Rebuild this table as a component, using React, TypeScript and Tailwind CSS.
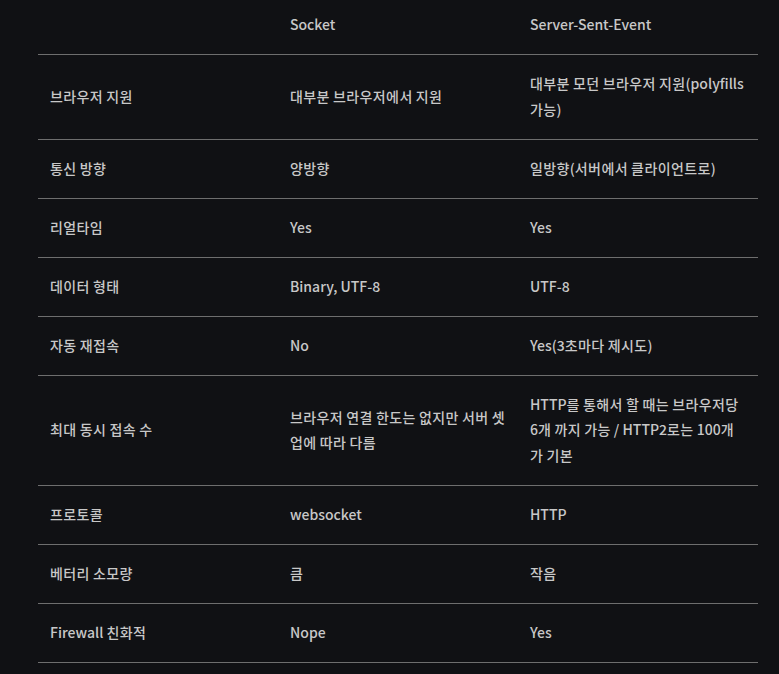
import React from "react";

const rows: [string, string, string][] = [
  ["브라우저 지원", "대부분 브라우저에서 지원", "대부분 모던 브라우저 지원(polyfills 가능)"],
  ["통신 방향", "양방향", "일방향(서버에서 클라이언트로)"],
  ["리얼타임", "Yes", "Yes"],
  ["데이터 형태", "Binary, UTF-8", "UTF-8"],
  ["자동 재접속", "No", "Yes(3초마다 제시도)"],
  ["최대 동시 접속 수", "브라우저 연결 한도는 없지만 서버 셋업에 따라 다름", "HTTP를 통해서 할 때는 브라우저당 6개 까지 가능 / HTTP2로는 100개가 기본"],
  ["프로토콜", "websocket", "HTTP"],
  ["베터리 소모량", "큼", "작음"],
  ["Firewall 친화적", "Nope", "Yes"],
];

function Txt({ text }: { text: string }) {
  const parts = text.match(/[\uAC00-\uD7A3]+|\s+|[^\uAC00-\uD7A3\s]+/g) || [];
  return (
    <>
      {parts.map((p, i) =>
        /[\uAC00-\uD7A3]/.test(p) ? (
          <span key={i} className="tracking-[0.4px]">
            {p}
          </span>
        ) : (
          <React.Fragment key={i}>{p}</React.Fragment>
        )
      )}
    </>
  );
}

export default function App() {
  return (
    <div
      className="min-h-[674px] w-full bg-[#101114] text-[14px] font-medium text-[#c8c8c8]"
      style={{ fontFamily: '"Noto Sans CJK KR", "Noto Sans", sans-serif' }}
    >
      <div className="pl-[38px] pr-[21px]">
        <table className="w-[720px] table-fixed border-collapse">
          <thead>
            <tr className="border-b border-[#6e6e6e]">
              <th className="w-[240px] px-3 pt-[11px] pb-[17px] text-left font-medium leading-[26px]"></th>
              <th className="w-[240px] px-3 pt-[11px] pb-[17px] text-left font-medium leading-[26px]">Socket</th>
              <th className="w-[240px] px-3 pt-[11px] pb-[17px] text-left font-medium leading-[26px]">Server-Sent-Event</th>
            </tr>
          </thead>
          <tbody>
            {rows.map((r, i) => (
              <tr key={i} className="border-b border-[#6e6e6e]">
                {r.map((c, j) => (
                  <td key={j} className="px-3 py-[16.25px] align-middle leading-[25.5px]">
                    <Txt text={c} />
                  </td>
                ))}
              </tr>
            ))}
          </tbody>
        </table>
      </div>
    </div>
  );
}
